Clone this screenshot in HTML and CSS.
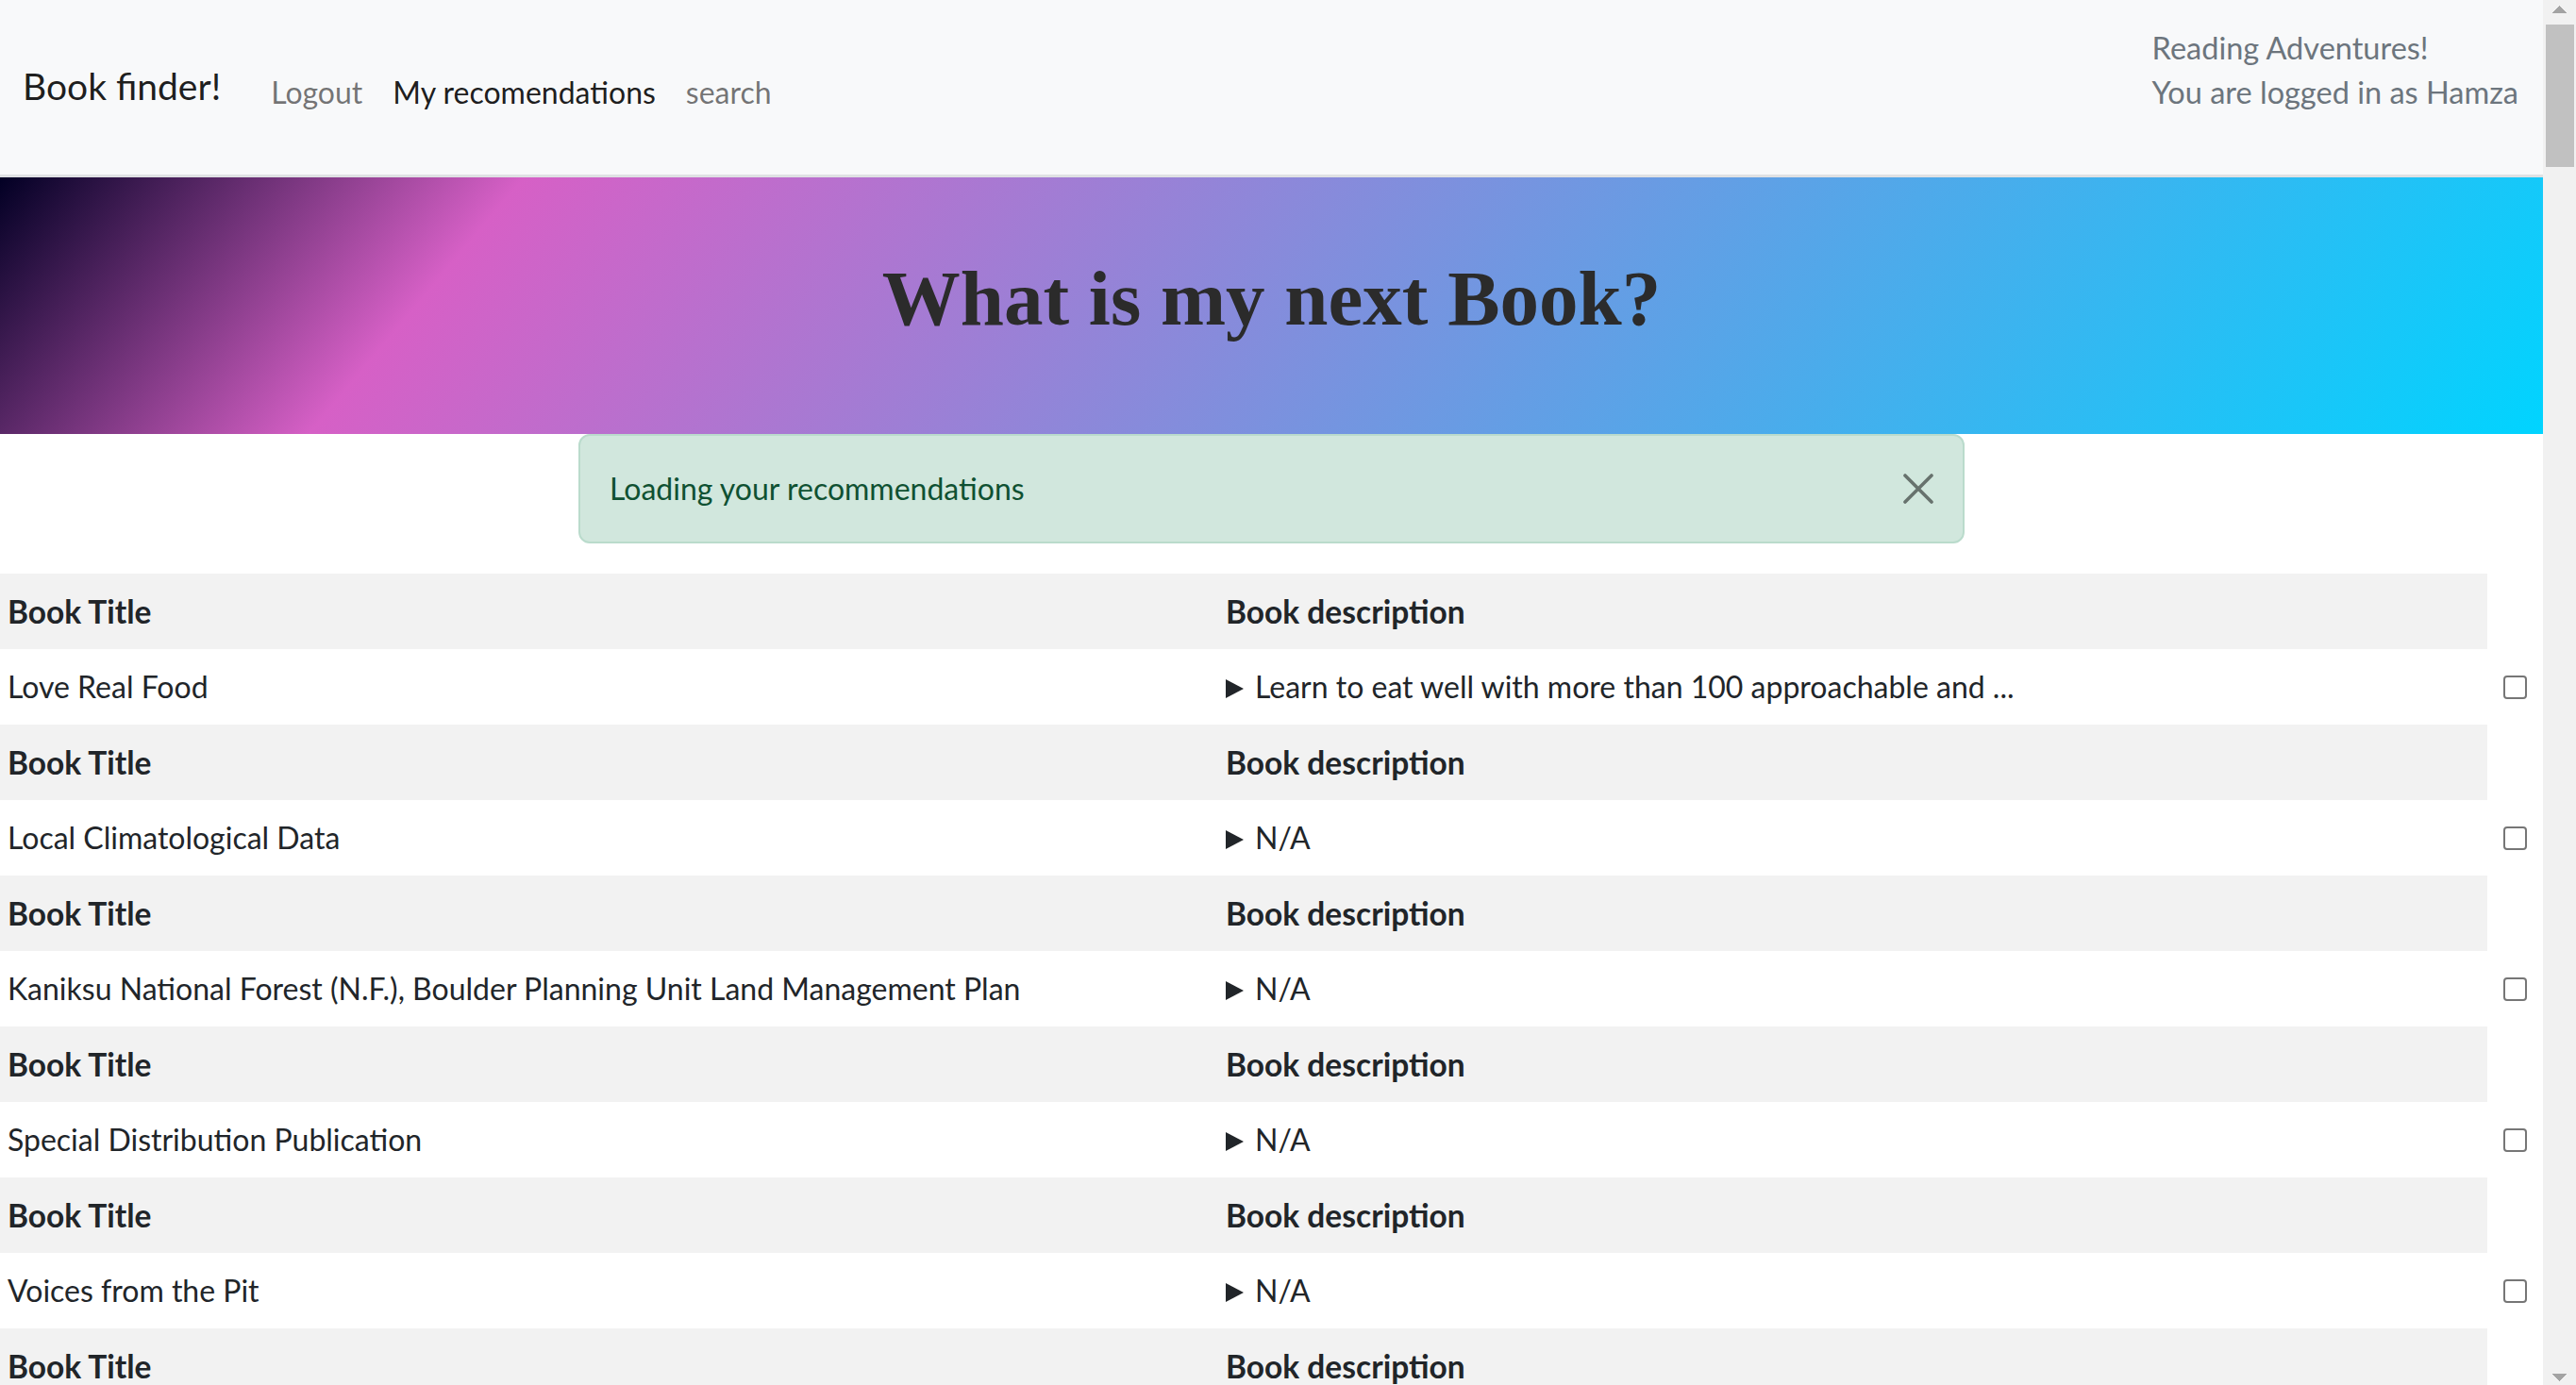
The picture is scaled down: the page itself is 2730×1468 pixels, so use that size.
FILE: index.html
```html
<!DOCTYPE html>
<html lang="en">
<head>
<meta charset="utf-8">
<title>Book finder!</title>
<link rel="stylesheet" href="styles.css">
</head>
<body>
<nav class="navbar">
  <div class="nav-left">
    <a class="brand" href="#">Book finder!</a>
    <ul class="nav-links">
      <li><a class="nav-link" href="#">Logout</a></li>
      <li><a class="nav-link active" href="#">My recomendations</a></li>
      <li><a class="nav-link" href="#">search</a></li>
    </ul>
  </div>
  <div class="user-info">
    <div>Reading Adventures!</div>
    <div>You are logged in as Hamza</div>
  </div>
</nav>

<header class="hero">
  <h1>What is my next Book?</h1>
</header>

<main>
  <div class="alert" role="alert">
    <span>Loading your recommendations</span>
    <button class="btn-close" type="button" aria-label="Close">
      <svg viewBox="0 0 32 32" width="32" height="32"><path d="M2 2 L30 30 M30 2 L2 30" stroke="#000" stroke-width="3.6" stroke-linecap="round" fill="none"/></svg>
    </button>
  </div>

  <table class="books">
    <colgroup><col class="c-title"><col class="c-desc"><col class="c-check"></colgroup>
    <tbody>
      <tr class="head"><th>Book Title</th><th>Book description</th></tr>
      <tr><td>Love Real Food</td><td><details><summary>Learn to eat well with more than 100 approachable and ...</summary></details></td><td class="check"><input type="checkbox" aria-label="Select Love Real Food"></td></tr>
    </tbody>
    <tbody>
      <tr class="head"><th>Book Title</th><th>Book description</th></tr>
      <tr><td>Local Climatological Data</td><td><details><summary>N/A</summary></details></td><td class="check"><input type="checkbox" aria-label="Select Local Climatological Data"></td></tr>
    </tbody>
    <tbody>
      <tr class="head"><th>Book Title</th><th>Book description</th></tr>
      <tr><td>Kaniksu National Forest (N.F.), Boulder Planning Unit Land Management Plan</td><td><details><summary>N/A</summary></details></td><td class="check"><input type="checkbox" aria-label="Select Kaniksu National Forest"></td></tr>
    </tbody>
    <tbody>
      <tr class="head"><th>Book Title</th><th>Book description</th></tr>
      <tr><td>Special Distribution Publication</td><td><details><summary>N/A</summary></details></td><td class="check"><input type="checkbox" aria-label="Select Special Distribution Publication"></td></tr>
    </tbody>
    <tbody>
      <tr class="head"><th>Book Title</th><th>Book description</th></tr>
      <tr><td>Voices from the Pit</td><td><details><summary>N/A</summary></details></td><td class="check"><input type="checkbox" aria-label="Select Voices from the Pit"></td></tr>
    </tbody>
    <tbody>
      <tr class="head"><th>Book Title</th><th>Book description</th></tr>
    </tbody>
  </table>
</main>
</body>
</html>
```
FILE: styles.css
```css
/* Page frame: the right-hand strip mimics the window's scrollbar */
html {
  background:
    linear-gradient(to top left, #a3a3a3 50%, transparent 50%) right 17px top 6px / 8px 8px no-repeat fixed,
    linear-gradient(to top right, #a3a3a3 50%, transparent 50%) right 9px top 6px / 8px 8px no-repeat fixed,
    linear-gradient(to bottom left, #a3a3a3 50%, transparent 50%) right 17px bottom 4px / 8px 8px no-repeat fixed,
    linear-gradient(to bottom right, #a3a3a3 50%, transparent 50%) right 9px bottom 4px / 8px 8px no-repeat fixed,
    linear-gradient(#c1c1c1, #c1c1c1) right 2px top 26px / 30px 151px no-repeat fixed,
    #f1f1f1;
}

body {
  margin: 0 35px 0 0;
  font-family: Lato, "Noto Sans", sans-serif;
  font-size: 32px;
  line-height: 1.5;
  color: #212529;
  background: #fff;
}

/* Navbar */
.navbar {
  display: flex;
  justify-content: space-between;
  align-items: flex-start;
  box-sizing: border-box;
  height: 188px;
  padding: 27px 24px 0;
  background: #f8f9fa;
  border-bottom: 3px solid #dfe1e3;
}

.nav-left {
  display: flex;
  align-items: flex-end;
  margin-top: 35px;
}

.brand {
  font-size: 39px;
  line-height: 58px;
  color: rgba(0, 0, 0, 0.9);
  text-decoration: none;
  margin-right: 37px;
}

.nav-links {
  display: flex;
  list-style: none;
  margin: 0;
  padding: 0;
}

.nav-link {
  display: block;
  padding: 0 16px;
  font-size: 32px;
  line-height: 44px;
  color: rgba(0, 0, 0, 0.55);
  text-decoration: none;
}

.nav-link.active {
  color: rgba(0, 0, 0, 0.9);
}

.user-info {
  color: #6c757d;
  font-size: 32.5px;
  line-height: 47px;
  padding-right: 2px;
}

/* Hero */
.hero {
  display: flex;
  align-items: center;
  justify-content: center;
  height: 272px;
  background: linear-gradient(130deg, #020024 0%, #d660c6 19%, #00d4ff 100%);
}

.hero h1 {
  margin: 0 0 14px;
  font-family: "Liberation Serif", "Times New Roman", serif;
  font-weight: 700;
  font-size: 83px;
  line-height: 1.2;
  color: #2b2b2b;
}

/* Alert */
.alert {
  display: flex;
  align-items: center;
  justify-content: space-between;
  box-sizing: border-box;
  width: 1469px;
  margin: 0 auto 32px;
  padding: 32px 31px;
  background: #d1e7dd;
  color: #0f5132;
  border: 2px solid #badbcc;
  border-radius: 12px;
}

.btn-close {
  display: flex;
  padding: 0;
  margin: 0;
  border: 0;
  background: transparent;
  opacity: 0.5;
  cursor: pointer;
}

/* Books table */
.books {
  width: 100%;
  border-collapse: collapse;
  table-layout: fixed;
}

.c-title { width: 1291px; }
.c-desc { width: 1345px; }
.c-check { width: 59px; }

.books th,
.books td {
  padding: 16px 8px;
  text-align: left;
  vertical-align: middle;
  font-size: 32px;
  line-height: 48px;
}

.books .head th {
  background: #f2f2f2;
  font-weight: 700;
  font-size: 33.5px;
}

.books td.check {
  padding: 0;
  text-align: center;
}

.books summary {
  display: block;
  list-style: none;
  cursor: pointer;
}

.books summary::-webkit-details-marker {
  display: none;
}

.books summary::before {
  content: "";
  display: inline-block;
  width: 0;
  height: 0;
  margin-right: 12px;
  border-left: 19px solid #212529;
  border-top: 10.5px solid transparent;
  border-bottom: 10.5px solid transparent;
  vertical-align: baseline;
}

.books input[type="checkbox"] {
  appearance: none;
  -webkit-appearance: none;
  display: block;
  box-sizing: border-box;
  width: 25px;
  height: 25px;
  margin: 0 auto;
  border: 2px solid #767676;
  border-radius: 4px;
  background: #fff;
}
```
